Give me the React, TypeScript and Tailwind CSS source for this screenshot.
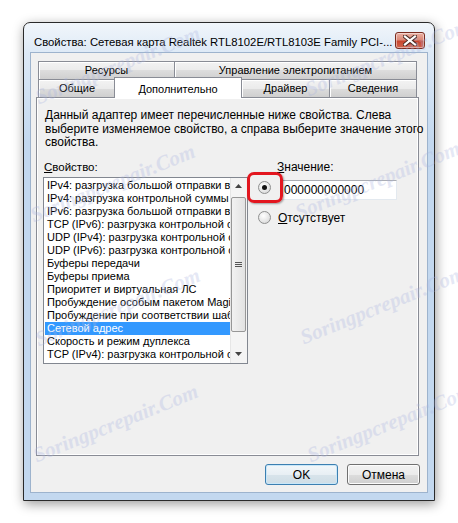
import React from "react";

const ui = "font-['Liberation_Sans',Arial,sans-serif] text-[11px] text-black";

const items = [
  "IPv4: разгрузка большой отправки в",
  "IPv4: разгрузка контрольной суммы",
  "IPv6: разгрузка большой отправки  в",
  "TCP (IPv6): разгрузка контрольной с",
  "UDP (IPv4): разгрузка контрольной с",
  "UDP (IPv6): разгрузка контрольной с",
  "Буферы передачи",
  "Буферы приема",
  "Приоритет и виртуальная ЛС",
  "Пробуждение особым пакетом Magic",
  "Пробуждение при соответствии шаблону",
  "Сетевой адрес",
  "Скорость и режим дуплекса",
  "TCP (IPv4): разгрузка контрольной с",
];

const marks = [
  "left-[30px] top-[50px]",
  "left-[300px] top-[42px]",
  "left-[25px] top-[168px]",
  "left-[290px] top-[165px]",
  "left-[30px] top-[292px]",
  "left-[295px] top-[290px]",
  "left-[28px] top-[408px]",
  "left-[302px] top-[408px]",
];

const tabIdle =
  "flex items-center justify-center h-[18px] border border-b-0 border-[#898c95] bg-[linear-gradient(#f3f3f3,#ebebeb_50%,#dddddd_50%,#cfcfcf)] shadow-[inset_1px_1px_0_#fff]";

function Radio({ checked }: { checked?: boolean }) {
  return (
    <span className="flex h-[13px] w-[13px] shrink-0 items-center justify-center rounded-full border border-[#8e8f8f] bg-[radial-gradient(circle_at_40%_35%,#ffffff,#e4e4e4_60%,#cfcfcf)]">
      {checked && <span className="h-[5px] w-[5px] rounded-full bg-[#111]" />}
    </span>
  );
}

function Button({ label, primary }: { label: string; primary?: boolean }) {
  return (
    <button
      className={
        primary
          ? "h-[21px] w-[73px] rounded-[3px] border border-[#3c7fb1] bg-[linear-gradient(#f2f7fa,#e8eff4_50%,#d8e4eb_50%,#cfdde6)] text-[12px] shadow-[inset_0_0_0_1px_#c9e7f8]"
          : "h-[21px] w-[73px] rounded-[3px] border border-[#707070] bg-[linear-gradient(#f2f2f2,#ebebeb_50%,#dddddd_50%,#cfcfcf)] text-[12px] shadow-[inset_0_0_0_1px_#fcfcfc]"
      }
    >
      {label}
    </button>
  );
}

export default function App() {
  return (
    <div className={`relative h-[523px] w-[458px] overflow-hidden bg-white pl-[23px] pt-[22px] ${ui}`}>
      <div className="flex h-[479px] w-[412px] flex-col rounded-t-[7px] border border-[#2a2a2a] bg-[linear-gradient(#f1f6fb,#dde9f6_30px,#c3d8ef_120px,#c3d8ef)] shadow-[1px_3px_12px_rgba(0,0,0,0.4)]">
        <div className="flex h-[29px] items-start">
          <div className="mt-[12px] min-w-0 flex-1 overflow-hidden pl-[10px] text-[11.3px] leading-[15px] text-black whitespace-nowrap">
            Свойства: Сетевая карта Realtek RTL8102E/RTL8103E Family PCI-...
          </div>
          <div className="mr-[9px] mt-[9px] flex h-[17px] w-[30px] shrink-0 items-center justify-center rounded-[3px] border border-[#7a2b1f] bg-[linear-gradient(#eab0a4,#dc8a79_45%,#c8452e_55%,#d0664e)] shadow-[inset_0_0_0_1px_rgba(255,255,255,0.45)]">
            <svg width="14" height="11" viewBox="0 0 14 11">
              <path d="M2 1.5 L12 9.5 M12 1.5 L2 9.5" stroke="#4a2a24" strokeWidth="4.2" strokeLinecap="square" />
              <path d="M2 1.5 L12 9.5 M12 1.5 L2 9.5" stroke="#ffffff" strokeWidth="2.2" strokeLinecap="square" />
            </svg>
          </div>
        </div>

        <div className="mx-[6px] flex h-[441px] flex-col border border-[#9db3cd] bg-[#f0f0f0]">
          <div className="ml-[5px] mt-[8px] w-[383px]">
            <div className="flex px-[2px]">
              <div className={`${tabIdle} w-[137px]`}>Ресурсы</div>
              <div className={`${tabIdle} -ml-px flex-1`}>Управление электропитанием</div>
            </div>
            <div className="flex h-[18px] items-start px-[2px]">
              <div className={`${tabIdle} w-[78px]`}>Общие</div>
              <div className="relative z-10 -ml-[2px] -mt-[2px] flex h-[21px] w-[128px] items-start justify-center border border-b-0 border-[#898c95] bg-white pt-[3px]">
                Дополнительно
              </div>
              <div className={`${tabIdle} -ml-[1px] w-[89px]`}>Драйвер</div>
              <div className={`${tabIdle} -ml-px flex-1`}>Сведения</div>
            </div>

            <div className="h-[359px] border border-[#898c95] bg-[#f0f0f0] px-[6px] pt-[11px] shadow-[inset_1px_1px_0_#fff,inset_-1px_-1px_0_#fff]">
              <p className="pl-[2px] text-[12px] leading-[13.5px] whitespace-nowrap">
                Данный адаптер имеет перечисленные ниже свойства. Слева
                <br />
                выберите изменяемое свойство, а справа выберите значение этого
                <br />
                свойства.
              </p>

              <div className="mt-[11px] flex">
                <div className="w-[205px]">
                  <div className="pl-[1px] text-[11.5px] leading-[13px]">
                    <span className="underline">С</span>войство:
                  </div>
                  <div className="mt-[3px] flex h-[187px] border border-[#828790] bg-white">
                    <div className="flex-1 overflow-hidden pl-px pt-px">
                      {items.map((t) => (
                        <div
                          key={t}
                          className={
                            t === "Сетевой адрес"
                              ? "h-[13px] bg-[#3399ff] pl-[2px] leading-[13px] text-white whitespace-nowrap"
                              : "h-[13px] pl-[2px] leading-[13px] whitespace-nowrap"
                          }
                        >
                          {t}
                        </div>
                      ))}
                    </div>
                    <div className="flex w-[17px] shrink-0 flex-col bg-[#f4f4f4] shadow-[inset_1px_0_0_#e6e6e6]">
                      <div className="flex h-[17px] items-center justify-center">
                        <svg width="7" height="4" viewBox="0 0 7 4">
                          <path d="M0 4 L3.5 0 L7 4 Z" fill="#444" />
                        </svg>
                      </div>
                      <div className="mx-[1px] mt-[2px] flex h-[135px] items-center justify-center rounded-[2px] border border-[#979797] bg-[linear-gradient(90deg,#f2f2f2,#e2e2e2)]">
                        <svg width="7" height="7" viewBox="0 0 7 7">
                          <path d="M0 1.5 H7 M0 3.5 H7 M0 5.5 H7" stroke="#555" strokeWidth="1" />
                        </svg>
                      </div>
                      <div className="flex-1" />
                      <div className="flex h-[17px] items-center justify-center">
                        <svg width="7" height="4" viewBox="0 0 7 4">
                          <path d="M0 0 L3.5 4 L7 0 Z" fill="#444" />
                        </svg>
                      </div>
                    </div>
                  </div>
                </div>

                <div className="ml-[10px] flex-1">
                  <div className="pl-[19px] text-[12px] leading-[13px]">
                    <span className="underline">З</span>начение:
                  </div>
                  <div className="relative mt-[6px] flex items-start">
                    <div className="mt-[1px]">
                      <Radio checked />
                    </div>
                    <div className="ml-[10px] flex h-[20px] w-[116px] items-center border border-[#e3e9ef] border-t-[#abadb3] bg-white pl-[2px] text-[12px]">
                      000000000000
                    </div>
                    <div className="absolute -left-[11px] -top-[8px] h-[31px] w-[36px] rounded-[7px] border-[3px] border-[#e3161f] shadow-[1px_1px_2px_rgba(0,0,0,0.35)]" />
                  </div>
                  <div className="mt-[11px] flex items-center">
                    <Radio />
                    <span className="ml-[7px] text-[12px] leading-[14px]">
                      <span className="underline">О</span>тсутствует
                    </span>
                  </div>
                </div>
              </div>
            </div>
          </div>

          <div className="mt-[8px] flex justify-end gap-[9px] pr-[7px]">
            <Button label="OK" primary />
            <Button label="Отмена" />
          </div>
        </div>
      </div>

      {marks.map((m) => (
        <div
          key={m}
          className={`pointer-events-none absolute ${m} -rotate-[22deg] font-['Liberation_Serif',serif] text-[21px] font-bold italic text-[#aab4e0] opacity-30 whitespace-nowrap`}
        >
          Soringpcrepair.Com
        </div>
      ))}
    </div>
  );
}
